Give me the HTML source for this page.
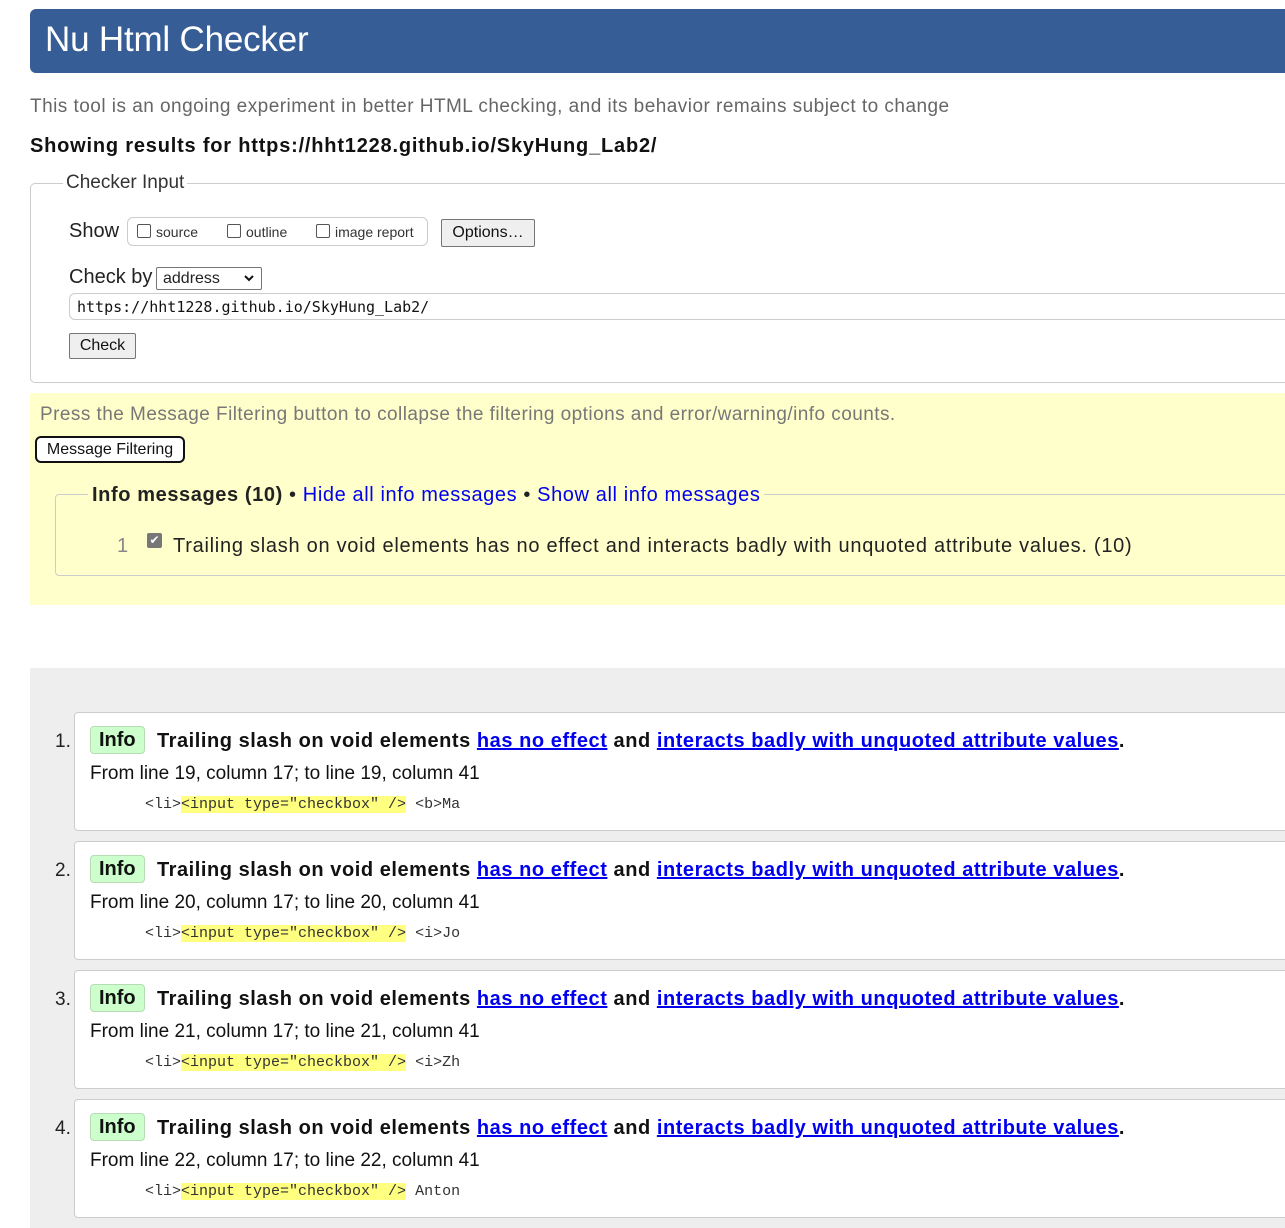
<!DOCTYPE html>
<html><head><meta charset="utf-8"><style>
body{margin:0;width:1285px;height:1226px;overflow:hidden;background:#fff;font-family:"Liberation Sans",sans-serif;color:#222;position:relative}
.a{position:absolute;white-space:nowrap}
.hdr{left:30px;top:9px;width:1270px;height:64px;background:#365d95;border-radius:6px 0 0 6px}
.hdr span{position:absolute;left:15px;top:11px;font-size:35px;color:#fff;letter-spacing:-.2px}
.box{border:1px solid #ccc;border-right:none;border-radius:5px 0 0 5px}
.btn{background:#efefef;border:1px solid #767676;border-radius:2px;font-size:16px;color:#111}
.cb{display:inline-block;width:12px;height:12px;border:1px solid #555;border-radius:2px;vertical-align:-1px;margin-right:5px;background:#fff}
.card{position:absolute;left:74px;width:1215px;height:117px;background:#fff;border:1px solid #ccc;border-radius:4px}
.num{position:absolute;left:-20px;top:18px;font-size:19px}
.badge{position:absolute;left:15px;top:13px;height:26px;padding:0 8px;background:#ccffcc;border:1px solid #b5dcb5;border-radius:4px;font-weight:bold;font-size:20px;line-height:26px;color:#111}
.msg{position:absolute;left:82px;top:17px;font-weight:bold;font-size:20px;color:#111;letter-spacing:.55px}
.msg a{color:#00e;text-decoration:underline}
.loc{position:absolute;left:15px;top:50px;font-size:19px;color:#111}
.code{position:absolute;left:70px;top:83px;font-family:"Liberation Mono",monospace;font-size:15px;color:#333}
.code b{font-weight:normal;background:#ffff80}
</style></head><body>
<div class="a hdr"><span>Nu Html Checker</span></div>
<div class="a" style="left:30px;top:96px;font-size:19px;color:#666;letter-spacing:.47px">This tool is an ongoing experiment in better HTML checking, and its behavior remains subject to change</div>
<div class="a" style="left:30px;top:135px;font-size:20px;font-weight:bold;color:#111;letter-spacing:.8px">Showing results for https://hht1228.github.io/SkyHung_Lab2/</div>
<div class="a box" style="left:30px;top:183px;width:1260px;height:198px"></div>
<div class="a" style="left:63px;top:172px;font-size:19px;background:#fff;padding:0 3px;color:#333">Checker Input</div>
<div class="a" style="left:69px;top:220px;font-size:20px">Show</div>
<div class="a" style="left:127px;top:217px;width:299px;height:27px;border:1px solid #ccc;border-radius:6px;font-size:14px;line-height:28px;color:#333"><span style="position:absolute;left:9px"><span class="cb"></span>source</span><span style="position:absolute;left:99px"><span class="cb"></span>outline</span><span style="position:absolute;left:188px"><span class="cb"></span>image report</span></div>
<div class="a btn" style="left:441px;top:219px;width:92px;height:26px;line-height:26px;text-align:center">Options…</div>
<div class="a" style="left:69px;top:266px;font-size:20px">Check by</div>
<div class="a" style="left:156px;top:267px;border:1px solid #767676;border-radius:2px;font-size:16px;line-height:21px;padding-left:6px;box-sizing:border-box;width:106px;height:23px">address<svg style="position:absolute;right:7px;top:7px" width="10" height="7"><path d="M1 1L5 5L9 1" stroke="#111" stroke-width="2" fill="none"/></svg></div>
<div class="a" style="left:69px;top:293px;width:1230px;height:25px;border:1px solid #ccc;border-radius:6px;font-family:'DejaVu Sans Mono','Liberation Mono',monospace;font-size:15px;line-height:27px;padding-left:7px;color:#111">https://hht1228.github.io/SkyHung_Lab2/</div>
<div class="a btn" style="left:69px;top:333px;width:65px;height:24px;line-height:24px;text-align:center">Check</div>
<div class="a" style="left:30px;top:393px;width:1260px;height:212px;background:#ffffcc"></div>
<div class="a" style="left:40px;top:404px;font-size:19px;color:#777;letter-spacing:.45px">Press the Message Filtering button to collapse the filtering options and error/warning/info counts.</div>
<div class="a" style="left:35px;top:436px;width:146px;height:23px;border:2px solid #111;border-radius:6px;font-size:16px;line-height:23px;text-align:center;background:#fff;color:#111">Message Filtering</div>
<div class="a" style="left:55px;top:494px;width:1240px;height:80px;border:1px solid #ccc;border-right:none;border-radius:4px 0 0 4px"></div>
<div class="a" style="left:88px;top:484px;font-size:20px;background:#ffffcc;padding:0 4px;color:#222;letter-spacing:.6px"><b>Info messages (10)</b> • <span style="color:#00e">Hide all info messages</span> • <span style="color:#00e">Show all info messages</span></div>
<div class="a" style="left:117px;top:535px;font-size:20px;color:#888">1</div>
<div class="a" style="left:147px;top:533px;width:15px;height:15px;background:#777;border-radius:2px;color:#fff;font-size:12px;line-height:15px;text-align:center">✔</div>
<div class="a" style="left:173px;top:535px;font-size:20px;color:#222;letter-spacing:.73px">Trailing slash on void elements has no effect and interacts badly with unquoted attribute values. (10)</div>
<div class="a" style="left:30px;top:668px;width:1260px;height:560px;background:#eee"></div>

<div class="card" style="top:712px"><span class="num">1.</span><span class="badge">Info</span><span class="msg">Trailing slash on void elements <a>has no effect</a> and <a>interacts badly with unquoted attribute values</a>.</span><span class="loc">From line 19, column 17; to line 19, column 41</span><span class="code">&lt;li&gt;<b>&lt;input type="checkbox" /&gt;</b> &lt;b&gt;Ma</span></div>
<div class="card" style="top:841px"><span class="num">2.</span><span class="badge">Info</span><span class="msg">Trailing slash on void elements <a>has no effect</a> and <a>interacts badly with unquoted attribute values</a>.</span><span class="loc">From line 20, column 17; to line 20, column 41</span><span class="code">&lt;li&gt;<b>&lt;input type="checkbox" /&gt;</b> &lt;i&gt;Jo</span></div>
<div class="card" style="top:970px"><span class="num">3.</span><span class="badge">Info</span><span class="msg">Trailing slash on void elements <a>has no effect</a> and <a>interacts badly with unquoted attribute values</a>.</span><span class="loc">From line 21, column 17; to line 21, column 41</span><span class="code">&lt;li&gt;<b>&lt;input type="checkbox" /&gt;</b> &lt;i&gt;Zh</span></div>
<div class="card" style="top:1099px"><span class="num">4.</span><span class="badge">Info</span><span class="msg">Trailing slash on void elements <a>has no effect</a> and <a>interacts badly with unquoted attribute values</a>.</span><span class="loc">From line 22, column 17; to line 22, column 41</span><span class="code">&lt;li&gt;<b>&lt;input type="checkbox" /&gt;</b> Anton</span></div>
</body></html>
